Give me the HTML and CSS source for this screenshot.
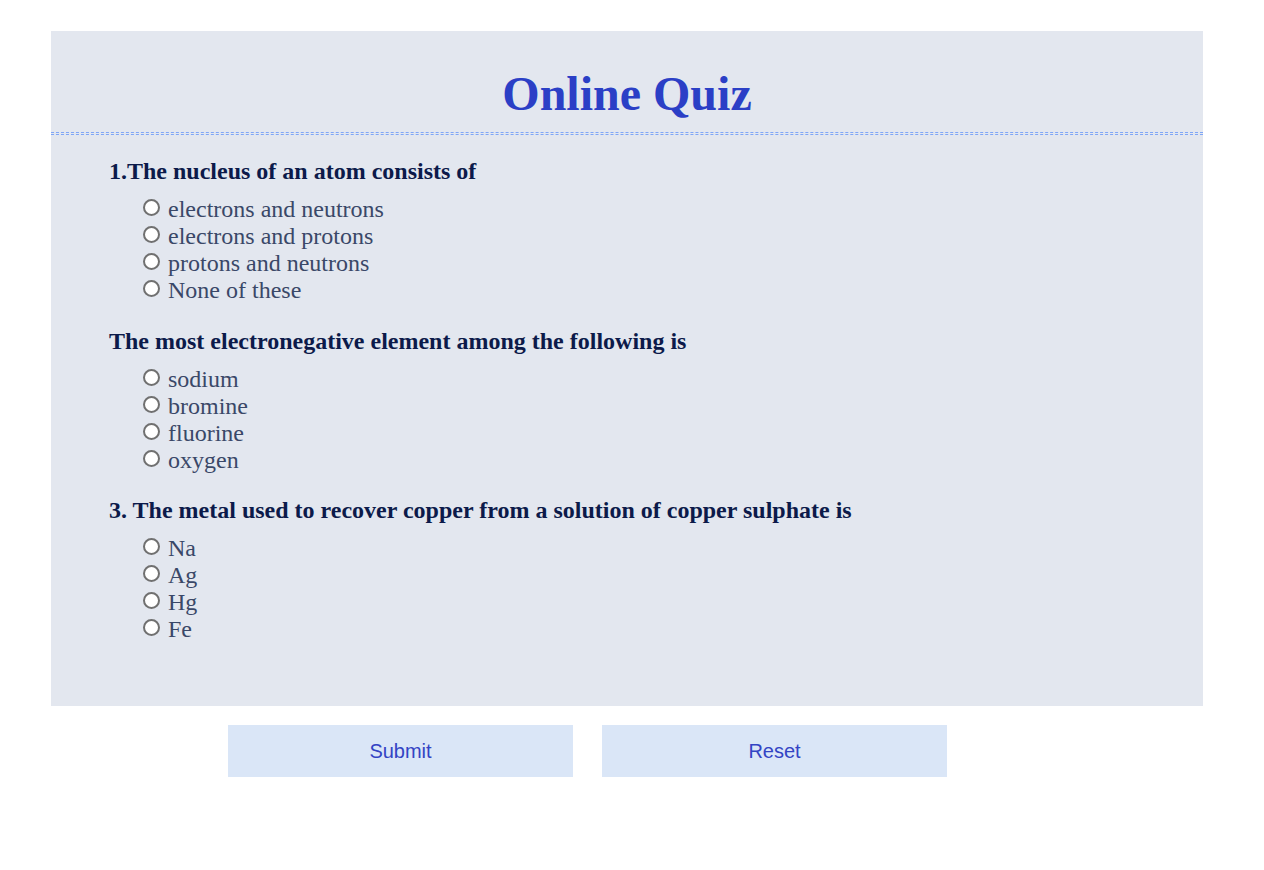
FILE: index.html
```html
<!DOCTYPE html>
<html lang="en">
<head>
<meta charset="utf-8">
<title>Online Quiz</title>
<link rel="stylesheet" href="styles.css">
</head>
<body>
<form class="quiz">
  <div class="quiz-header">
    <h1 class="quiz-title">Online Quiz</h1>
  </div>
  <div class="quiz-body">
    <div class="question">
      <p class="question-text">1.The nucleus of an atom consists of</p>
      <label class="option"><input type="radio" name="q1"> electrons and neutrons</label>
      <label class="option"><input type="radio" name="q1"> electrons and protons</label>
      <label class="option"><input type="radio" name="q1"> protons and neutrons</label>
      <label class="option"><input type="radio" name="q1"> None of these</label>
    </div>
    <div class="question">
      <p class="question-text">The most electronegative element among the following is</p>
      <label class="option"><input type="radio" name="q2"> sodium</label>
      <label class="option"><input type="radio" name="q2"> bromine</label>
      <label class="option"><input type="radio" name="q2"> fluorine</label>
      <label class="option"><input type="radio" name="q2"> oxygen</label>
    </div>
    <div class="question">
      <p class="question-text">3. The metal used to recover copper from a solution of copper sulphate is</p>
      <label class="option"><input type="radio" name="q3"> Na</label>
      <label class="option"><input type="radio" name="q3"> Ag</label>
      <label class="option"><input type="radio" name="q3"> Hg</label>
      <label class="option"><input type="radio" name="q3"> Fe</label>
    </div>
  </div>
</form>
<div class="actions">
  <button type="button" class="btn">Submit</button>
  <button type="button" class="btn">Reset</button>
</div>
</body>
</html>
```

FILE: styles.css
```css
html, body {
  margin: 0;
  padding: 0;
  background: #ffffff;
  font-family: "Liberation Serif", "Times New Roman", serif;
}

.quiz {
  margin: 31px 61px 0 51px;
  background: #e3e7ef;
  display: block;
}

.quiz-header {
  padding: 35px 0 11px;
  border-bottom: 1px dashed #7fa6f6;
  margin-bottom: 1px;
}

.quiz-title {
  margin: 0;
  text-align: center;
  font-size: 48px;
  line-height: 55px;
  font-weight: bold;
  color: #2b3fc6;
}

.quiz-body {
  border-top: 1px dashed #7fa6f6;
  padding: 22px 0 63px 58px;
  display: flex;
  flex-direction: column;
  gap: 22.5px;
}

.question {
  display: flex;
  flex-direction: column;
}

.question-text {
  margin: 0 0 11px;
  font-size: 24px;
  line-height: 28px;
  font-weight: bold;
  color: #0c1a4a;
}

.option {
  display: flex;
  align-items: center;
  gap: 8px;
  height: 27px;
  padding-left: 34px;
  font-size: 24px;
  color: #3a4868;
}

.option input {
  appearance: none;
  -webkit-appearance: none;
  margin: 0;
  width: 17px;
  height: 17px;
  border: 2px solid #707070;
  border-radius: 50%;
  background: #ffffff;
  flex: none;
  position: relative;
  top: -2px;
}

.actions {
  display: flex;
  gap: 29px;
  padding: 19px 0 0 228px;
}

.btn {
  width: 345px;
  height: 52px;
  border: none;
  background: #dae6f7;
  color: #3344c4;
  font-family: "Liberation Sans", Arial, sans-serif;
  font-size: 20px;
  padding: 0;
}
```
